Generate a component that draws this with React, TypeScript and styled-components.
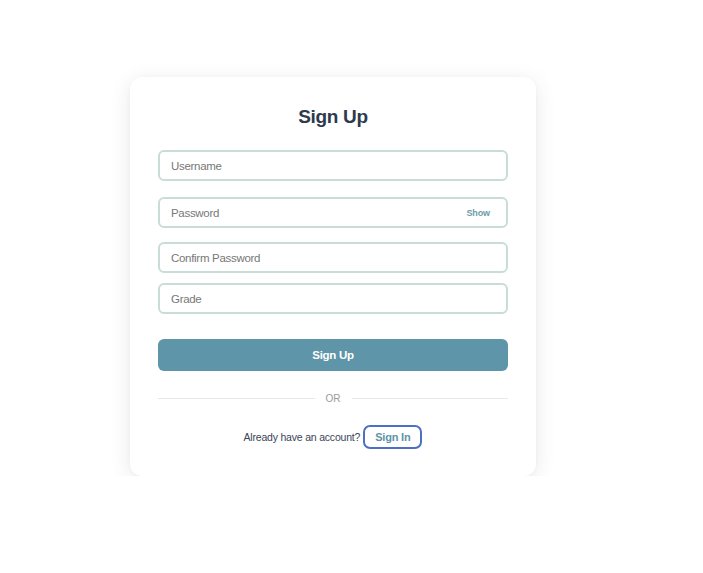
import React, { useState, ChangeEvent } from 'react';
import styled, { createGlobalStyle } from 'styled-components';

const GlobalStyle = createGlobalStyle`
  html, body {
    margin: 0;
    padding: 0;
    background: #ffffff;
    font-family: 'Liberation Sans', Arial, sans-serif;
  }
  * {
    box-sizing: border-box;
  }
`;

const Page = styled.div`
  padding: 77px 0 0 130px;
`;

const Card = styled.form`
  width: 406px;
  padding: 29px 28px 27px;
  background: #ffffff;
  border-radius: 12px;
  box-shadow: 0 4px 22px rgba(0, 0, 0, 0.09), 0 1px 4px rgba(0, 0, 0, 0.03);
  display: flex;
  flex-direction: column;
`;

const Title = styled.h2`
  margin: 0 0 22px;
  font-size: 19px;
  line-height: 22px;
  font-weight: 700;
  letter-spacing: -0.3px;
  color: #2e3a4e;
  text-align: center;
`;

const Field = styled.div<{ gap: number }>`
  display: flex;
  align-items: center;
  height: 31px;
  margin-bottom: ${(p) => p.gap}px;
  padding: 0 16px 0 11px;
  border: 2px solid #c9ddd8;
  border-radius: 6px;
  background: #ffffff;
`;

const Input = styled.input`
  flex: 1;
  min-width: 0;
  border: none;
  outline: none;
  background: transparent;
  padding: 0;
  font-family: 'Liberation Sans', Arial, sans-serif;
  font-size: 11.5px;
  letter-spacing: -0.3px;
  color: #333;

  &::placeholder {
    color: #777777;
  }
`;

const ShowButton = styled.button`
  border: none;
  background: transparent;
  padding: 0;
  font-family: 'Liberation Sans', Arial, sans-serif;
  font-size: 9px;
  font-weight: 700;
  letter-spacing: -0.1px;
  color: #6c9ca8;
  cursor: pointer;
`;

const SubmitButton = styled.button`
  height: 32px;
  border: none;
  border-radius: 6px;
  background: #5f95a8;
  color: #ffffff;
  font-family: 'Liberation Sans', Arial, sans-serif;
  font-size: 11.5px;
  font-weight: 700;
  letter-spacing: -0.3px;
  cursor: pointer;
`;

const Divider = styled.div`
  display: flex;
  align-items: center;
  gap: 11px;
  margin-top: 21px;
  height: 12px;
  font-size: 10px;
  color: #9a9a9a;

  &::before,
  &::after {
    content: '';
    flex: 1;
    height: 1px;
    background: #e6e8ea;
  }
`;

const SignInRow = styled.div`
  display: flex;
  justify-content: center;
  align-items: center;
  gap: 3px;
  margin-top: 21px;
  font-size: 10.5px;
  letter-spacing: -0.2px;
  color: #3a4556;
`;

const SignInButton = styled.button`
  height: 24px;
  padding: 0 10px;
  border: 2px solid #4d70c2;
  border-radius: 7px;
  background: #ffffff;
  color: #5f93a8;
  font-family: 'Liberation Sans', Arial, sans-serif;
  font-size: 11px;
  font-weight: 700;
  letter-spacing: -0.2px;
  cursor: pointer;
`;

const App: React.FC = () => {
  const [showPassword, setShowPassword] = useState<boolean>(false);
  const [form, setForm] = useState({ username: '', password: '', confirm: '', grade: '' });

  const update = (key: keyof typeof form) => (e: ChangeEvent<HTMLInputElement>): void => {
    setForm((prev) => ({ ...prev, [key]: e.target.value }));
  };

  return (
    <>
      <GlobalStyle />
      <Page>
        <Card onSubmit={(e) => e.preventDefault()}>
          <Title>Sign Up</Title>
          <Field gap={16}>
            <Input placeholder="Username" value={form.username} onChange={update('username')} />
          </Field>
          <Field gap={14}>
            <Input
              type={showPassword ? 'text' : 'password'}
              placeholder="Password"
              value={form.password}
              onChange={update('password')}
            />
            <ShowButton type="button" onClick={() => setShowPassword((s) => !s)}>
              {showPassword ? 'Hide' : 'Show'}
            </ShowButton>
          </Field>
          <Field gap={10}>
            <Input
              type="password"
              placeholder="Confirm Password"
              value={form.confirm}
              onChange={update('confirm')}
            />
          </Field>
          <Field gap={25}>
            <Input placeholder="Grade" value={form.grade} onChange={update('grade')} />
          </Field>
          <SubmitButton type="submit">Sign Up</SubmitButton>
          <Divider>OR</Divider>
          <SignInRow>
            Already have an account?
            <SignInButton type="button">Sign In</SignInButton>
          </SignInRow>
        </Card>
      </Page>
    </>
  );
};

export default App;
